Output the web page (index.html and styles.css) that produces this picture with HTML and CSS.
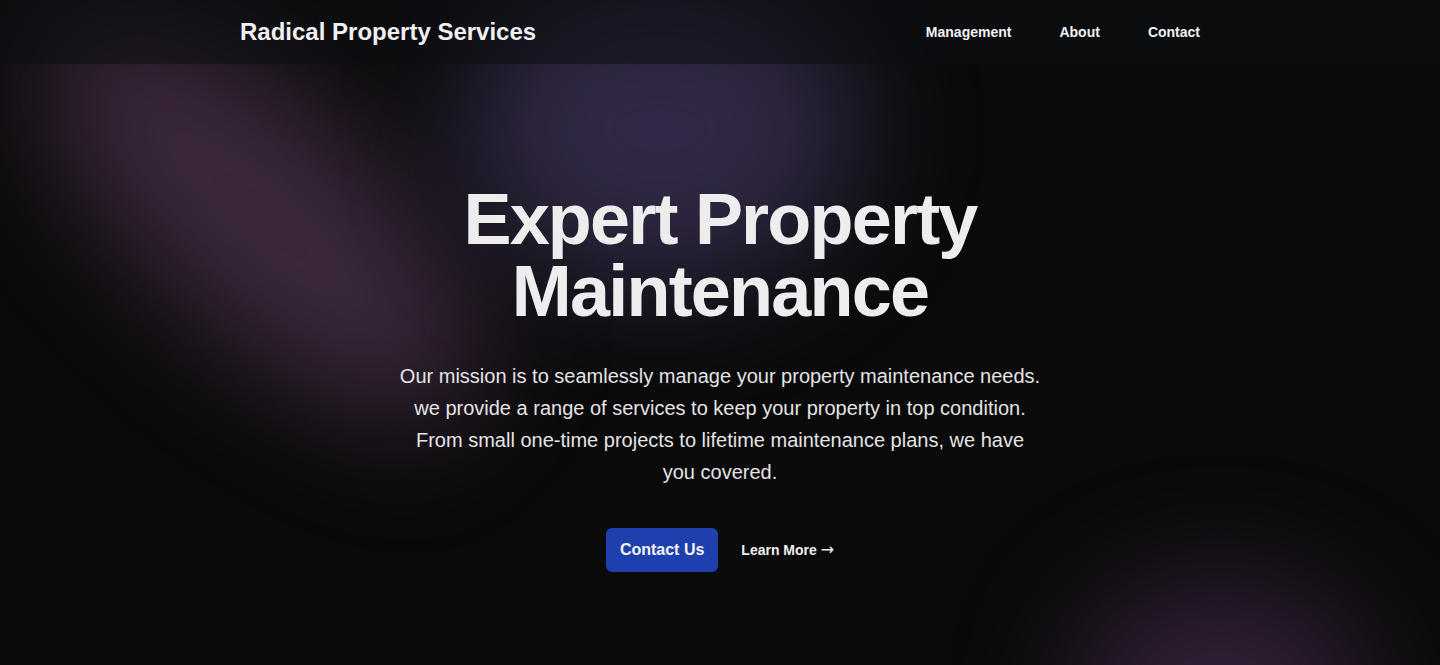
FILE: index.html
```html
<!DOCTYPE html>
<html lang="en">
<head>
<meta charset="utf-8">
<title>Radical Property Services</title>
<link rel="stylesheet" href="styles.css">
</head>
<body>
<div class="page">
  <div class="glow glow-left"></div>
  <div class="glow glow-top"></div>
  <div class="glow glow-bottom"></div>
  <header class="topbar">
    <div class="container topbar-inner">
      <a class="brand" href="#">Radical Property Services</a>
      <nav class="nav">
        <a href="#">Management</a>
        <a href="#">About</a>
        <a href="#">Contact</a>
      </nav>
    </div>
  </header>
  <main class="hero">
    <h1 class="hero-title">Expert Property<br>Maintenance</h1>
    <p class="hero-text">Our mission is to seamlessly manage your property maintenance needs. we provide a range of services to keep your property in top condition. From small one-time projects to lifetime maintenance plans, we have you covered.</p>
    <div class="actions">
      <a class="btn-primary" href="#">Contact Us</a>
      <a class="btn-link" href="#">Learn More <span class="arrow">→</span></a>
    </div>
  </main>
</div>
</body>
</html>
```

FILE: styles.css
```css
* { box-sizing: border-box; }
html, body { margin: 0; padding: 0; }
body {
  background: #0a0a0a;
  font-family: "Liberation Sans", Arial, sans-serif;
  color: #ededed;
  overflow: hidden;
}
a { color: inherit; text-decoration: none; }
.page {
  position: relative;
  min-height: 665px;
  overflow: hidden;
  isolation: isolate;
}
.glow {
  position: absolute;
  z-index: -1;
  border-radius: 50%;
  filter: blur(60px);
}
.glow-left {
  left: -20px;
  top: 100px;
  width: 560px;
  height: 230px;
  background: #3f2a40;
  transform: rotate(42deg);
  opacity: 0.95;
}
.glow-top {
  left: 460px;
  top: -30px;
  width: 400px;
  height: 320px;
  background: #332a48;
  opacity: 0.95;
}
.glow-bottom {
  left: 1070px;
  top: 580px;
  width: 300px;
  height: 240px;
  background: #3a2440;
  opacity: 0.85;
}
.topbar {
  height: 64px;
  background: rgba(13, 14, 19, 0.55);
}
.container {
  width: 960px;
  margin: 0 auto;
}
.topbar-inner {
  height: 64px;
  display: flex;
  align-items: center;
  justify-content: space-between;
}
.brand {
  font-size: 24px;
  font-weight: 700;
  color: #f0f0f0;
}
.nav {
  display: flex;
  gap: 48px;
  font-size: 14px;
  font-weight: 700;
  color: #f2f2f2;
}
.hero {
  display: flex;
  flex-direction: column;
  align-items: center;
  text-align: center;
  padding-top: 119px;
}
.hero-title {
  margin: 0;
  font-size: 72px;
  line-height: 72px;
  font-weight: 700;
  color: #ededed;
  letter-spacing: -1.8px;
}
.hero-text {
  margin: 33px 0 0;
  max-width: 644px;
  font-size: 20px;
  line-height: 32px;
  color: #e4e4e4;
}
.actions {
  margin-top: 40px;
  display: flex;
  align-items: center;
  gap: 23px;
}
.btn-primary {
  background: #1e40af;
  color: #f5f5f5;
  font-size: 16px;
  font-weight: 700;
  line-height: 24px;
  padding: 10px 14px;
  border-radius: 6px;
}
.btn-link {
  font-size: 14px;
  font-weight: 700;
  color: #f0f0f0;
}
.arrow {
  font-family: "DejaVu Sans", sans-serif;
  font-weight: 400;
  font-size: 16px;
  line-height: 14px;
}
```
